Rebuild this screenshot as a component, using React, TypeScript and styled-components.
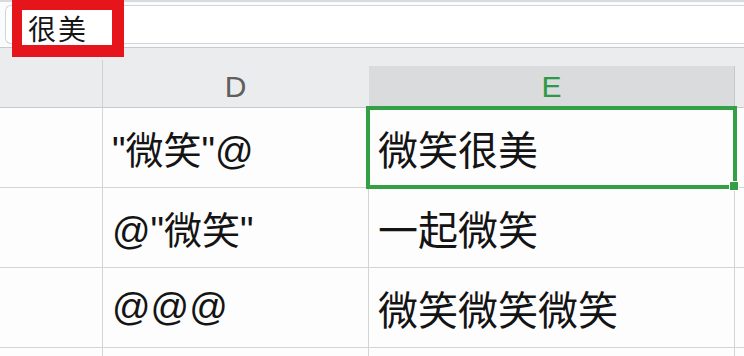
import { Fragment } from "react";
import styled, { createGlobalStyle } from "styled-components";

const GlobalStyle = createGlobalStyle`
  html, body {
    margin: 0;
    padding: 0;
    background: #ffffff;
  }
  body {
    font-family: "Liberation Sans", "Noto Sans CJK SC", sans-serif;
  }
`;

const Sheet = styled.div`
  position: relative;
  width: 744px;
  height: 356px;
  overflow: hidden;
  background: #fdfdfe;
  display: flex;
  flex-direction: column;
  & > * {
    flex-shrink: 0;
  }
`;

const FormulaBar = styled.div`
  height: 48px;
  box-sizing: border-box;
  border-top: 2px solid #d9dadb;
  border-bottom: 1px solid #c9cacb;
  padding: 3px 0 3px 5px;
  background: #fafbfc;
  display: flex;
`;

const FormulaInput = styled.div`
  flex: 1;
  border: 1px solid #d3d4d6;
  border-right: none;
  border-radius: 6px 0 0 6px;
  background: #ffffff;
`;

const Callout = styled.div`
  position: absolute;
  left: 12px;
  top: 0;
  width: 112px;
  height: 57px;
  box-sizing: border-box;
  border: 10px solid #e6141b;
  border-bottom-width: 12px;
  border-right-width: 12px;
  background: #ffffff;
  display: flex;
  align-items: center;
  padding-left: 6px;
  font-family: "Noto Sans CJK SC", sans-serif;
  font-size: 28px;
  letter-spacing: 2px;
  color: #151515;
`;

const HeaderStrip = styled.div`
  height: 18px;
  background: #ebeced;
  display: grid;
  grid-template-columns: 103px 1fr;
`;

const StripLine = styled.div`
  border-right: 1px solid #d0d1d2;
  margin-top: 12px;
`;

const Grid = styled.div`
  display: grid;
  grid-template-columns: 103px 266px 366px 1fr;
  grid-template-rows: 42px 80px 80px 80px 80px;
`;

const HeaderCell = styled.div<{ $active?: boolean }>`
  background: ${(p) => (p.$active ? "#d9dbdc" : "#ebeced")};
  border-right: 1px solid ${(p) => (p.$active ? "#c4c6c8" : "transparent")};
  border-bottom: 1px solid #c8c9ca;
  display: flex;
  align-items: center;
  justify-content: center;
  font-family: "Liberation Sans", sans-serif;
  font-size: 30px;
  color: ${(p) => (p.$active ? "#2d9a43" : "#5f5f5f")};
  &:first-child {
    border-right: 1px solid #d0d1d2;
  }
`;

const Cell = styled.div<{ $size?: number }>`
  position: relative;
  box-sizing: border-box;
  border-right: 1px solid #d3d4d6;
  border-bottom: 1px solid #d3d4d6;
  background: #fdfdfe;
  display: flex;
  align-items: center;
  padding-left: 9px;
  font-family: "Liberation Sans", "Noto Sans CJK SC", sans-serif;
  font-size: ${(p) => p.$size ?? 38}px;
  color: #141414;
  white-space: nowrap;
  &:nth-child(4n) {
    border-right: none;
  }
`;

const Selection = styled.div`
  position: absolute;
  z-index: 2;
  left: -3px;
  top: -2px;
  right: -3px;
  bottom: -2px;
  border: 4px solid #33a046;
  pointer-events: none;
`;

const FillHandle = styled.div`
  position: absolute;
  right: -6px;
  bottom: -6px;
  width: 8px;
  height: 8px;
  background: #33a046;
  border: 1px solid #ffffff;
`;

const rows: [string, string][] = [
  ['"微笑"@', "微笑很美"],
  ['@"微笑"', "一起微笑"],
  ["@@@", "微笑微笑微笑"],
  ["", ""],
];

export default function App(): JSX.Element {
  return (
    <>
      <GlobalStyle />
      <Sheet>
        <FormulaBar>
          <FormulaInput />
        </FormulaBar>
        <Callout>很美</Callout>
        <HeaderStrip>
          <StripLine />
          <div />
        </HeaderStrip>
        <Grid>
          <HeaderCell />
          <HeaderCell>D</HeaderCell>
          <HeaderCell $active>E</HeaderCell>
          <HeaderCell />
          {rows.map(([d, e], i) => (
            <Fragment key={i}>
              <Cell />
              <Cell>{d}</Cell>
              <Cell $size={40}>
                {e}
                {i === 0 && (
                  <Selection>
                    <FillHandle />
                  </Selection>
                )}
              </Cell>
              <Cell />
            </Fragment>
          ))}
        </Grid>
      </Sheet>
    </>
  );
}
